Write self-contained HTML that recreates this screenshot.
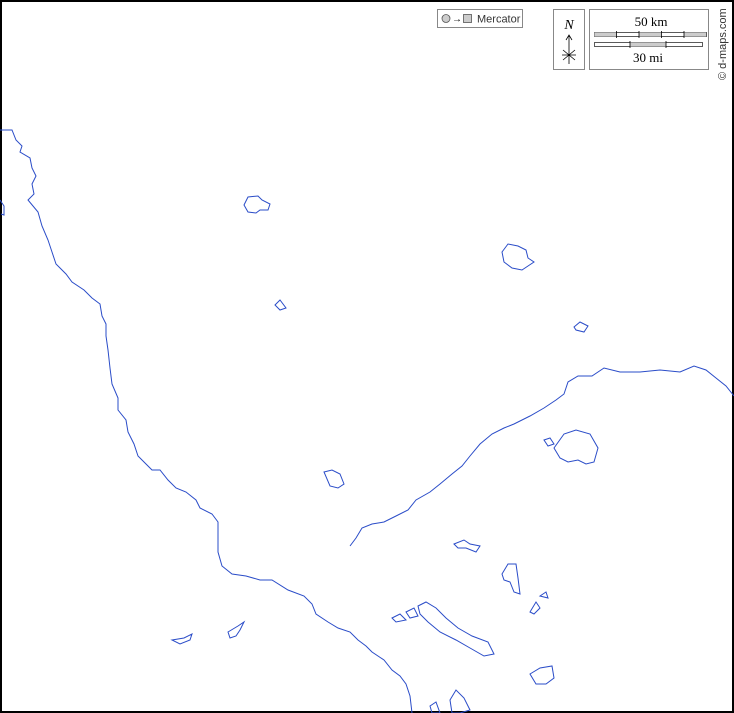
<!DOCTYPE html>
<html><head><style>
html,body{margin:0;padding:0;background:#fff}
svg{display:block}
text{font-family:"Liberation Serif",serif}
</style></head><body>
<svg width="734" height="713" viewBox="0 0 734 713" xmlns="http://www.w3.org/2000/svg">
<rect x="1" y="1" width="732" height="711" fill="#fff" stroke="#000" stroke-width="2"/>
<g fill="none" stroke="#2a4cc8" stroke-width="1">
<path d="M0,130 L12,130 L16,140 L22,146 L20,152 L30,158 L32,168 L36,176 L32,184 L34,194 L28,200 L38,212 L42,226 L48,240 L52,252 L56,264 L66,274 L72,282 L84,290 L92,298 L100,304 L102,316 L106,324 L106,336 L108,350 L110,368 L112,384 L118,398 L118,410 L126,420 L128,432 L134,444 L138,456 L146,464 L152,470 L160,470 L168,480 L176,488 L186,492 L196,500 L200,508 L212,514 L218,522 L218,536 L218,552 L222,566 L232,574 L246,576 L260,580 L272,580 L288,590 L304,596 L312,604 L316,614 L328,622 L338,628 L350,632 L358,640 L366,646 L372,652 L384,660 L392,670 L400,676 L406,684 L410,696 L412,713"/>
<path d="M0,200 L4,206 L4,215 L1,214"/>
<path d="M350,546 L356,538 L362,528 L372,524 L384,522 L396,516 L408,510 L416,500 L430,492 L440,484 L452,474 L462,466 L470,456 L480,444 L492,434 L504,428 L514,424 L530,416 L544,408 L556,400 L564,394 L568,382 L578,376 L592,376 L604,368 L620,372 L640,372 L660,370 L680,372 L694,366 L706,370 L716,378 L726,386 L734,396"/>
<path d="M244,205 L248,197 L258,196 L262,200 L270,204 L268,210 L260,210 L256,213 L248,212 Z"/>
<path d="M502,252 L508,244 L518,246 L526,250 L528,258 L534,262 L528,266 L522,270 L512,268 L504,262 Z"/>
<path d="M275,305 L280,300 L286,308 L280,310 Z"/>
<path d="M574,327 L580,322 L588,326 L584,332 L576,330 Z"/>
<path d="M544,440 L550,438 L554,444 L548,446 Z"/>
<path d="M554,448 L564,434 L576,430 L590,434 L598,448 L594,462 L586,464 L578,460 L568,462 L560,458 Z"/>
<path d="M324,472 L332,470 L340,474 L344,484 L338,488 L330,486 Z"/>
<path d="M454,544 L464,540 L470,544 L480,546 L476,552 L466,548 L458,548 Z"/>
<path d="M502,574 L508,564 L516,564 L518,578 L520,594 L514,592 L510,582 L504,580 Z"/>
<path d="M540,596 L546,592 L548,598 Z"/>
<path d="M530,612 L536,602 L540,608 L534,614 Z"/>
<path d="M418,606 L426,602 L436,608 L446,618 L458,628 L472,636 L488,642 L494,654 L484,656 L470,648 L456,640 L440,632 L428,622 L420,614 Z"/>
<path d="M392,618 L400,614 L406,620 L396,622 Z"/>
<path d="M406,612 L414,608 L418,616 L410,618 Z"/>
<path d="M172,640 L184,638 L192,634 L190,640 L180,644 Z"/>
<path d="M228,632 L238,626 L244,622 L240,630 L236,636 L230,638 Z"/>
<path d="M530,674 L540,668 L552,666 L554,678 L546,684 L536,684 Z"/>
<path d="M450,700 L456,690 L464,698 L470,710 L460,713 L452,713 Z"/>
<path d="M430,706 L436,702 L440,713 L432,713 Z"/>
</g>
<rect x="437.5" y="9.5" width="85" height="18" fill="#fff" stroke="#888"/>
<circle cx="446" cy="18.5" r="4" fill="#ccc" stroke="#555" stroke-width="0.8"/>
<text x="452" y="22" font-size="10" fill="#000" font-family="Liberation Sans">→</text>
<rect x="463.5" y="14.5" width="8" height="8" fill="#ccc" stroke="#555" stroke-width="0.8"/>
<text x="477" y="22.5" font-size="11" fill="#333" style="font-family:'Liberation Sans',sans-serif">Mercator</text>
<rect x="553.5" y="9.5" width="31" height="60" fill="#fff" stroke="#888"/>
<text x="569" y="29" font-size="14" font-style="italic" text-anchor="middle">N</text>
<g stroke="#000" stroke-width="0.8" fill="none">
<path d="M569,36 L569,64 M566,40 L569,35 L572,40 M562,55 L576,55 M563,50 L575,60 M575,50 L563,60"/>
</g>
<rect x="589.5" y="9.5" width="119" height="60" fill="#fff" stroke="#888"/>
<text x="651" y="26" font-size="13" text-anchor="middle">50 km</text>
<rect x="594.5" y="32.5" width="112" height="4" fill="#fff" stroke="#333" stroke-width="0.8"/>
<rect x="594.5" y="32.5" width="22" height="4" fill="#ccc"/>
<rect x="639" y="32.5" width="22" height="4" fill="#ccc"/>
<rect x="684" y="32.5" width="22" height="4" fill="#ccc"/>
<path d="M616.5,31 V38 M639,31 V38 M661.5,31 V38 M684,31 V38" stroke="#000" stroke-width="0.8"/>
<rect x="594.5" y="42.5" width="108" height="4" fill="#fff" stroke="#333" stroke-width="0.8"/>
<rect x="630" y="42.5" width="36" height="4" fill="#ccc"/>
<path d="M630,41 V48 M666,41 V48" stroke="#000" stroke-width="0.8"/>
<text x="648" y="62" font-size="13" text-anchor="middle">30 mi</text>
<text transform="translate(726,80) rotate(-90)" font-size="11" fill="#333" style="font-family:'Liberation Sans',sans-serif">© d-maps.com</text>
</svg>
</body></html>
